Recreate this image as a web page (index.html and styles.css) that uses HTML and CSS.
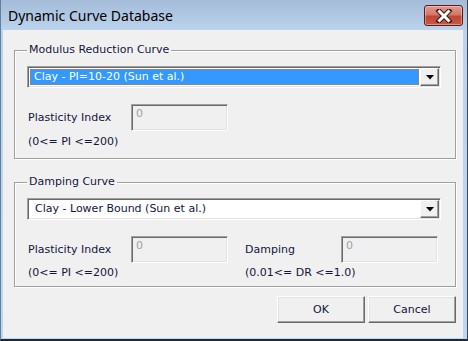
FILE: index.html
```html
<!DOCTYPE html>
<html>
<head>
<meta charset="utf-8">
<link rel="stylesheet" href="styles.css">
</head>
<body>
<div class="window">
  <div class="titlebar">
    <span class="title">Dynamic Curve Database</span>
    <div class="close">
      <svg width="18" height="14" viewBox="0 0 18 14">
        <path d="M4 2 L14 12 M14 2 L4 12" stroke="#4a1510" stroke-width="5" stroke-linecap="square" fill="none"/>
        <path d="M4.5 2.5 L13.5 11.5 M13.5 2.5 L4.5 11.5" stroke="#ffffff" stroke-width="3" stroke-linecap="square" fill="none"/>
      </svg>
    </div>
  </div>
  <div class="client">
    <fieldset class="group g1">
      <legend>Modulus Reduction Curve</legend>
      <div class="combo">
        <div class="combo-field"><span class="selected">Clay - PI=10-20 (Sun et al.)</span></div>
        <div class="drop"><svg width="8" height="5" viewBox="0 0 8 5"><path d="M0 0 H8 L4 4.5 Z" fill="#000"/></svg></div>
      </div>
      <div class="col">
        <div class="field"><span class="lbl">Plasticity Index</span><div class="textbox">0</div></div>
        <div class="range">(0&lt;= PI &lt;=200)</div>
      </div>
    </fieldset>
    <fieldset class="group g2">
      <legend>Damping Curve</legend>
      <div class="combo">
        <div class="combo-field white"><span class="plain">Clay - Lower Bound (Sun et al.)</span></div>
        <div class="drop"><svg width="8" height="5" viewBox="0 0 8 5"><path d="M0 0 H8 L4 4.5 Z" fill="#000"/></svg></div>
      </div>
      <div class="cols">
        <div class="col left">
          <div class="field"><span class="lbl">Plasticity Index</span><div class="textbox">0</div></div>
          <div class="range">(0&lt;= PI &lt;=200)</div>
        </div>
        <div class="col right">
          <div class="field"><span class="lbl">Damping</span><div class="textbox">0</div></div>
          <div class="range">(0.01&lt;= DR &lt;=1.0)</div>
        </div>
      </div>
    </fieldset>
    <div class="buttons">
      <button class="btn">OK</button>
      <button class="btn">Cancel</button>
    </div>
  </div>
</div>
</body>
</html>
```
FILE: styles.css
```css
html, body {
  margin: 0;
  padding: 0;
  background: #f0f0f0;
}
.window {
  width: 468px;
  height: 341px;
  box-sizing: border-box;
  display: flex;
  flex-direction: column;
  background: linear-gradient(#a4bcd9 0px, #b4cbe6 20px, #bcd3ec 30px, #c0d6ee 100%);
  border-right: 1px solid #3a4656;
  border-bottom: 2px solid #1e2836;
  border-left: 1px solid #5f7fa3;
}
.titlebar {
  height: 30px;
  flex: none;
  display: flex;
  align-items: flex-start;
  padding-left: 7px;
  position: relative;
}
.title {
  font-family: "Segoe UI", "Noto Sans", sans-serif;
  font-size: 14px;
  line-height: 20px;
  margin-top: 6px;
  color: #000;
}
.close {
  position: absolute;
  left: 423px;
  top: 5px;
  width: 39px;
  height: 21px;
  box-sizing: border-box;
  border: 1px solid #5e1a14;
  border-radius: 3px;
  background: linear-gradient(#e19a8f 0%, #d47868 45%, #bf4534 55%, #c75a43 100%);
  box-shadow: inset 0 0 0 1px rgba(255,255,255,0.35);
  display: flex;
  align-items: center;
  justify-content: center;
}
.client {
  flex: 1;
  margin: 0 4px 1px 2px;
  background: #f0f0f0;
  display: flex;
  flex-direction: column;
  font-family: "DejaVu Sans", Verdana, sans-serif;
  font-size: 11px;
  color: #14143c;
  border-bottom: 1px solid #e8f2fb;
}
.group {
  margin: 0 7px 0 11px;
  padding: 9px 14px 9px 12px;
  border: 1px solid #a0a0a0;
  box-shadow: 1px 1px 0 #ffffff, inset 1px 1px 0 #ffffff;
  min-width: 0;
}
.g1 {
  margin-top: 13px;
}
.g2 {
  margin-top: 16px;
  padding-bottom: 6px;
}
legend {
  padding: 0 2px;
  line-height: 14px;
}
.combo {
  height: 22px;
  box-sizing: border-box;
  display: flex;
  border-top: 1px solid #a0a0a0;
  border-left: 1px solid #a0a0a0;
  border-right: 1px solid #ffffff;
  border-bottom: 1px solid #ffffff;
  box-shadow: inset 1px 1px 0 #696969, inset -1px -1px 0 #e3e3e3;
  background: #ffffff;
  padding: 2px;
}
.combo-field {
  flex: 1;
  display: flex;
  min-width: 0;
}
.selected {
  flex: 1;
  background: #3399ff;
  color: #ffffff;
  outline: 1px dotted #d07a1a;
  outline-offset: -1px;
  padding-left: 4px;
  line-height: 16px;
  margin: 0 1px 0 0;
}
.plain {
  padding-left: 5px;
  line-height: 16px;
  color: #14143c;
}
.drop {
  width: 19px;
  flex: none;
  box-sizing: border-box;
  background: #f0f0f0;
  border-top: 1px solid #ffffff;
  border-left: 1px solid #ffffff;
  border-right: 1px solid #696969;
  border-bottom: 1px solid #696969;
  box-shadow: inset -1px -1px 0 #a0a0a0;
  display: flex;
  align-items: center;
  justify-content: center;
  margin-top: -1px;
  margin-bottom: -1px;
  margin-right: -1px;
}
.col {
  display: flex;
  flex-direction: column;
}
.cols {
  display: flex;
}
.cols .left {
  width: 217px;
}
.field {
  display: flex;
  align-items: center;
  margin-top: 16px;
  padding-left: 1px;
}
.lbl {
  width: 103px;
  flex: none;
  line-height: 14px;
}
.right .lbl {
  width: 96px;
}
.textbox {
  width: 97px;
  height: 27px;
  box-sizing: border-box;
  border-top: 1px solid #a0a0a0;
  border-left: 1px solid #a0a0a0;
  border-right: 1px solid #ffffff;
  border-bottom: 1px solid #ffffff;
  box-shadow: inset 1px 1px 0 #696969, inset -1px -1px 0 #e3e3e3;
  background: #f0f0f0;
  color: #a0a0a0;
  padding: 2px 0 0 4px;
  line-height: 14px;
}
.range {
  margin-top: 4px;
  padding-left: 1px;
  line-height: 14px;
}
.g2 .range {
  margin-top: 3px;
}
.buttons {
  display: flex;
  justify-content: flex-end;
  gap: 3px;
  margin-top: 9px;
  margin-right: 7px;
}
.btn {
  width: 88px;
  height: 27px;
  box-sizing: border-box;
  margin: 0;
  padding: 0;
  font-family: "DejaVu Sans", Verdana, sans-serif;
  font-size: 11px;
  color: #14143c;
  background: #f0f0f0;
  border-top: 1px solid #ffffff;
  border-left: 1px solid #ffffff;
  border-right: 1px solid #696969;
  border-bottom: 1px solid #696969;
  box-shadow: inset -1px -1px 0 #a0a0a0, inset 1px 1px 0 #e3e3e3;
}
```
